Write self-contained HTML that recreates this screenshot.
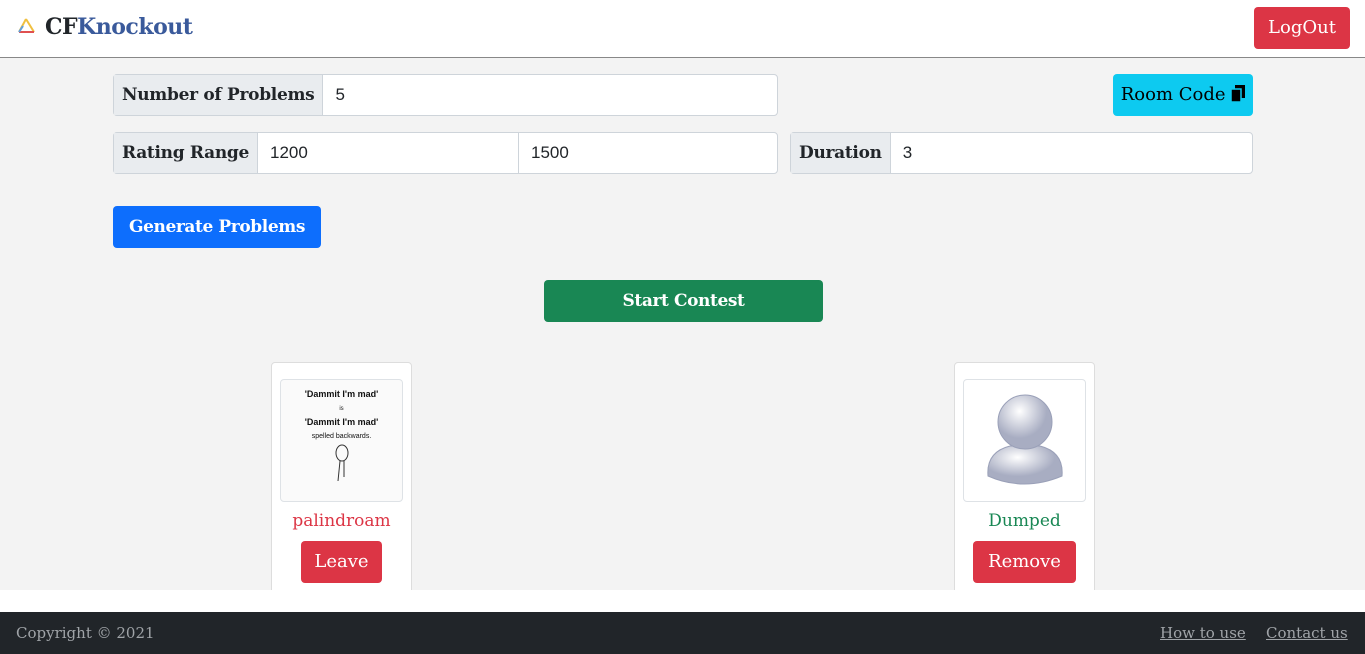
<!DOCTYPE html>
<html><head><style>
*{box-sizing:border-box;margin:0;padding:0}
body{width:1365px;height:654px;overflow:hidden;background:#fff;font-family:"DejaVu Serif",serif;color:#212529}
.nav{height:58px;border-bottom:1px solid #888;background:#fff;position:relative}
.brand{position:absolute;left:16px;top:14px;font-size:22px;font-weight:bold;letter-spacing:-0.5px}
.brand b{color:#3a5a9b}
.btn{position:absolute;border-radius:4px;color:#fff;text-align:center;font-size:18px}
.main{position:absolute;top:58px;left:0;width:1365px;height:532px;background:#f3f3f3;overflow:hidden}
.grp{position:absolute;height:42px;display:flex;border:1px solid #ced4da;border-radius:4px;background:#fff;font-size:17px}
.grp .l{background:#e9ecef;font-weight:bold;padding:0 8px;line-height:40px;border-right:1px solid #ced4da;letter-spacing:-0.3px}
.grp .v{font-family:"Liberation Sans",sans-serif;padding:0 12px;line-height:40px;font-size:17px}
.card{position:absolute;top:304px;width:141px;height:240px;background:#fff;border:1px solid #ddd;border-radius:4px}
.img{position:absolute;left:8px;top:16px;width:123px;height:123px;border:1px solid #dee2e6;border-radius:4px;background:#fafafa}
.name{position:absolute;top:148px;width:100%;text-align:center;font-size:17px}
.foot{position:absolute;top:612px;left:0;width:1365px;height:42px;background:#212529;color:#a0a4a8;font-size:15px}
.foot a{color:#a0a4a8;text-decoration:underline;position:absolute;top:12px}
</style></head><body>
<div class="nav">
<div class="brand"><svg width="22" height="18" viewBox="0 0 22 18" style="vertical-align:-1px;margin-right:7px"><path d="M10 2 L3 15 M10 2 L18 15" stroke="#f0c040" stroke-width="2" fill="none"/><path d="M3 15 L18 15" stroke="#e05050" stroke-width="2"/><path d="M3 15 L7 9" stroke="#60a0e0" stroke-width="2"/></svg>CF<b>Knockout</b></div>
<div class="btn" style="left:1254px;top:7px;width:96px;height:42px;line-height:42px;background:#dc3545">LogOut</div>
</div>
<div class="main">
<div class="grp" style="left:113px;top:16px;width:665px"><div class="l">Number of Problems</div><div class="v">5</div></div>
<div class="btn" style="left:1113px;top:16px;width:140px;height:42px;line-height:42px;background:#0dcaf0;color:#000;font-size:18px">Room Code <svg width="14" height="17" viewBox="0 0 14 17" style="vertical-align:-2px"><rect x="4" y="0" width="10" height="13" fill="#000"/><rect x="0" y="4" width="10" height="13" fill="#000" stroke="#0dcaf0" stroke-width="1.5"/></svg></div>
<div class="grp" style="left:113px;top:74px;width:665px"><div class="l">Rating Range</div><div class="v" style="width:261px;border-right:1px solid #ced4da">1200</div><div class="v">1500</div></div>
<div class="grp" style="left:790px;top:74px;width:463px"><div class="l">Duration</div><div class="v">3</div></div>
<div class="btn" style="left:113px;top:148px;width:208px;height:42px;line-height:42px;background:#0d6efd;font-weight:bold;font-size:17px;letter-spacing:-0.4px">Generate Problems</div>
<div class="btn" style="left:544px;top:222px;width:279px;height:42px;line-height:42px;background:#198754;font-weight:bold;font-size:17px;letter-spacing:-0.4px">Start Contest</div>
<div class="card" style="left:271px"><div class="img" style="font-family:'Liberation Sans',sans-serif;text-align:center;color:#111;font-size:9px;padding-top:8px;font-weight:bold;line-height:13px">'Dammit I'm mad'<br><span style="font-weight:normal;font-size:6px">is</span><br>'Dammit I'm mad'<br><span style="font-weight:normal;font-size:7px">spelled backwards.</span><br><svg width="20" height="40" viewBox="0 0 20 40"><ellipse cx="10" cy="10" rx="6" ry="8" fill="none" stroke="#333"/><path d="M8 18 L6 38 M12 18 L12 34" stroke="#333" fill="none"/></svg></div><div class="name" style="color:#dc3545">palindroam</div><div class="btn" style="left:29px;top:178px;width:81px;height:42px;line-height:42px;background:#dc3545">Leave</div></div>
<div class="card" style="left:954px"><div class="img" style="background:#fff"><svg width="121" height="121" viewBox="0 0 121 121"><defs><radialGradient id="g" cx="0.4" cy="0.3"><stop offset="0" stop-color="#fff"/><stop offset="1" stop-color="#a8adc2"/></radialGradient></defs><path d="M24 96 Q22 72 46 66 L76 66 Q100 72 98 96 Q60 112 24 96Z" fill="url(#g)" stroke="#9aa0b8"/><circle cx="61" cy="42" r="27" fill="url(#g)" stroke="#9aa0b8"/></svg></div><div class="name" style="color:#198754">Dumped</div><div class="btn" style="left:18px;top:178px;width:103px;height:42px;line-height:42px;background:#dc3545">Remove</div></div>
</div>
<div class="foot"><span style="position:absolute;left:16px;top:12px">Copyright © 2021</span><a style="left:1160px">How to use</a><a style="left:1266px">Contact us</a></div>
</body></html>
